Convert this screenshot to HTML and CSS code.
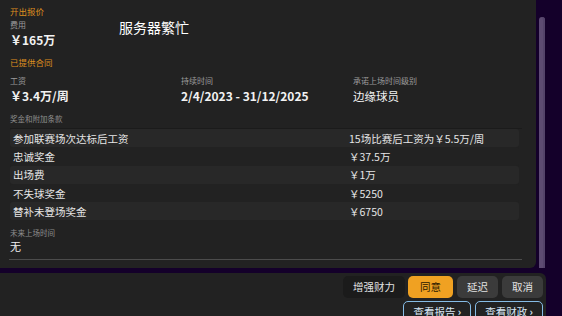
FILE: index.html
```html
<!DOCTYPE html>
<html lang="zh-CN">
<head>
    <meta charset="UTF-8">
    <meta name="viewport" content="width=device-width, initial-scale=1.0">
    <title>合同报价</title>
    <link rel="stylesheet" href="styles.css">
</head>
<body>
    <div class="screen">
        <div class="top">
            <div class="panel">
                <div class="sec-title">开出报价</div>
                <div class="label first">费用</div>
                <div class="value">￥165万</div>

                <div class="sec-title gap">已提供合同</div>
                <div class="contract">
                    <div>
                        <div class="label">工资</div>
                        <div class="value">￥3.4万/周</div>
                    </div>
                    <div>
                        <div class="label">持续时间</div>
                        <div class="value">2/4/2023 - 31/12/2025</div>
                    </div>
                    <div>
                        <div class="label">承诺上场时间级别</div>
                        <div class="value plain">边缘球员</div>
                    </div>
                </div>

                <div class="bonus-head">奖金和附加条款</div>
                <ul class="bonus">
                    <li><span>参加联赛场次达标后工资</span><span>15场比赛后工资为￥5.5万/周</span></li>
                    <li><span>忠诚奖金</span><span>￥37.5万</span></li>
                    <li><span>出场费</span><span>￥1万</span></li>
                    <li><span>不失球奖金</span><span>￥5250</span></li>
                    <li><span>替补未登场奖金</span><span>￥6750</span></li>
                </ul>

                <div class="label small">未来上场时间</div>
                <div class="none">无</div>
                <div class="rule"></div>

                <div class="toast">服务器繁忙</div>
            </div>
            <div class="track">
                <div class="thumb"></div>
            </div>
        </div>

        <div class="actions">
            <div class="btn-row">
                <div class="btn dark">增强财力</div>
                <div class="btn accept">同意</div>
                <div class="btn grey">延迟</div>
                <div class="btn grey">取消</div>
            </div>
            <div class="btn-row">
                <div class="btn link">查看报告 <b>›</b></div>
                <div class="btn link">查看财政 <b>›</b></div>
            </div>
        </div>
    </div>
</body>
</html>
```

FILE: styles.css
```css
*{
    box-sizing: border-box;
}
body{
    margin: 0;
    background: #14002a;
    font-family: "Noto Sans CJK SC", "Noto Sans", sans-serif;
    color: #f0f0f0;
}
ul,li{
    list-style: none;
    margin: 0;
    padding: 0;
}
.screen{
    width: 562px;
    height: 316px;
    overflow: hidden;
}
.top{
    display: flex;
    height: 268px;
}
.panel{
    position: relative;
    width: 536px;
    height: 268px;
    background: #222;
    border-bottom-right-radius: 6px;
    padding: 4px 14px 0 10px;
}
.track{
    flex: 1;
    padding: 17px 0 0 3px;
}
.thumb{
    width: 6px;
    height: 251px;
    background: #5d4b72;
    border-radius: 3px 3px 0 0;
    box-shadow: inset -2px 0 0 #54436a;
}
.sec-title{
    font-size: 8.5px;
    line-height: 14px;
    color: #de8f1f;
}
.sec-title.gap{
    margin-top: 6px;
}
.label{
    font-size: 8px;
    line-height: 12px;
    color: #9c9c9c;
}
.label.first{
    margin-top: 1px;
}
.value{
    font-size: 12px;
    line-height: 18px;
    font-weight: 700;
    color: #f2f2f2;
}
.value.plain{
    font-weight: 400;
    font-size: 11.5px;
}
.contract{
    display: grid;
    grid-template-columns: 171px 172px 1fr;
    margin-top: 6px;
}
.bonus-head{
    margin-top: 8px;
    font-size: 7.5px;
    line-height: 12px;
    color: #8e8e8e;
    padding-bottom: 3px;
    border-bottom: 1px solid #1b1b1b;
}
.bonus{
    width: 509px;
}
.bonus li{
    display: grid;
    grid-template-columns: 336px 1fr;
    height: 18.3px;
    align-items: center;
    padding-left: 3px;
    font-size: 10.5px;
    color: #e6e6e6;
    border-radius: 3px;
    background: #222;
}
.bonus li:nth-child(odd){
    background: #282828;
}
.label.small{
    margin-top: 7px;
    font-size: 7.5px;
    color: #8e8e8e;
}
.none{
    font-size: 11px;
    line-height: 14px;
}
.rule{
    margin: 6px 0 0 -1px;
    width: 513px;
    height: 1px;
    background: #4c4c4c;
}
.toast{
    position: absolute;
    left: 119px;
    top: 18px;
    font-size: 14px;
    line-height: 18px;
    color: #fff;
}
.actions{
    width: 546px;
    height: 43px;
    margin-top: 5px;
    background: #222;
    border-top-right-radius: 6px;
    padding: 3px 3px 0 0;
    display: flex;
    flex-direction: column;
    align-items: flex-end;
    gap: 3px;
}
.btn-row{
    display: flex;
    gap: 4px;
}
.btn{
    height: 22px;
    line-height: 22px;
    padding: 0 10px;
    font-size: 10.5px;
    border-radius: 5px;
    color: #e2e2e2;
}
.btn.dark{
    background: #1b1b1b;
    margin-right: -1px;
}
.btn.accept{
    background: #f0a122;
    color: #2b1800;
    padding: 0 12px;
}
.btn.grey{
    background: #3b3b3b;
}
.btn.link{
    height: 24px;
    line-height: 20px;
    border: 1.5px solid #86bce6;
    color: #d8e6f4;
    padding: 0 9px;
}
.btn.link b{
    font-weight: 700;
}
```
